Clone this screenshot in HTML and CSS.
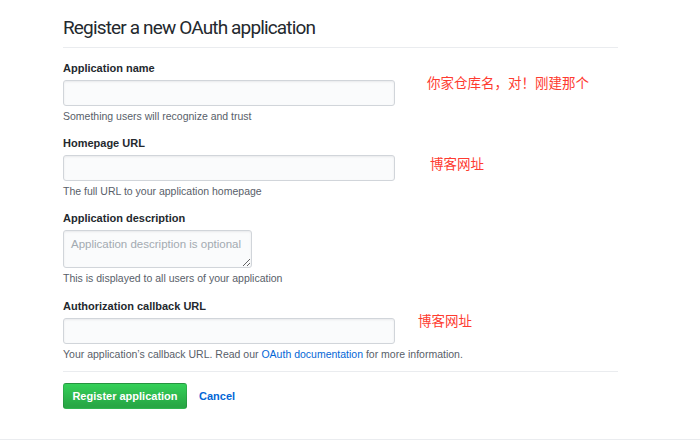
FILE: index.html
```html
<!DOCTYPE html>
<html lang="en">
<head>
<meta charset="utf-8">
<title>Register a new OAuth application</title>
<link rel="stylesheet" href="styles.css">
</head>
<body>
<div class="page">
  <h1 class="title">Register a new OAuth application</h1>
  <form class="form">
    <div class="group">
      <label class="label">Application name</label>
      <input class="input" type="text">
      <p class="note">Something users will recognize and trust</p>
      <span class="anno anno-1">你家仓库名，对！刚建那个</span>
    </div>
    <div class="group">
      <label class="label">Homepage URL</label>
      <input class="input" type="text">
      <p class="note">The full URL to your application homepage</p>
      <span class="anno anno-2">博客网址</span>
    </div>
    <div class="group group-desc">
      <label class="label">Application description</label>
      <textarea class="textarea" placeholder="Application description is optional"></textarea>
      <p class="note">This is displayed to all users of your application</p>
    </div>
    <div class="group">
      <label class="label">Authorization callback URL</label>
      <input class="input" type="text">
      <p class="note">Your application’s callback URL. Read our <a class="link" href="#">OAuth documentation</a> for more information.</p>
      <span class="anno anno-3">博客网址</span>
    </div>
    <div class="actions">
      <button class="btn" type="button">Register application</button>
      <a class="cancel" href="#">Cancel</a>
    </div>
  </form>
</div>
</body>
</html>
```
FILE: styles.css
```css
* { box-sizing: border-box; }
html, body { margin: 0; padding: 0; background: #fff; }
body {
  font-family: "Liberation Sans", Arial, "Noto Sans CJK SC", sans-serif;
  color: #24292e;
  border-bottom: 1px solid #eaecef;
  height: 440px;
}
.page {
  width: 618px;
  padding: 13px 0 0 63px;
}
.title {
  margin: 0;
  font-family: Roboto, "Liberation Sans", sans-serif;
  font-size: 19px;
  font-weight: normal;
  line-height: 30px;
  padding-bottom: 4px;
  border-bottom: 1px solid #eaecef;
  letter-spacing: -0.85px;
}
.form { display: flex; flex-direction: column; padding-top: 12px; }
.group { position: relative; display: flex; flex-direction: column; align-items: flex-start; margin-bottom: 11px; }
.group-desc { margin-bottom: 12px; }
.label {
  font-size: 11px;
  font-weight: bold;
  line-height: 16px;
  margin-bottom: 4px;
}
.input, .textarea {
  width: 332px;
  height: 26px;
  border: 1px solid #d1d5da;
  border-radius: 3px;
  background: #fafbfc;
  box-shadow: inset 0 1px 2px rgba(27,31,35,0.075);
  margin: 0;
  font: inherit;
}
.textarea {
  width: 189px;
  height: 38px;
  padding: 6px 7px;
  font-size: 11.5px;
  line-height: 14px;
  color: #24292e;
  resize: vertical;
}
.textarea::placeholder { color: #a3aab1; }
.note {
  margin: 2px 0 0;
  font-size: 10.5px;
  line-height: 16px;
  color: #586069;
}
.link { color: #0366d6; text-decoration: none; }
.anno {
  position: absolute;
  font-family: "Noto Sans CJK SC", sans-serif;
  font-size: 13.5px;
  line-height: 18px;
  color: #fe3b30;
  white-space: nowrap;
}
.anno-1 { left: 364px; top: 13px; }
.anno-2 { left: 367px; top: 19px; }
.anno-3 { left: 355px; top: 13px; }
.actions {
  display: flex;
  align-items: center;
  gap: 12px;
  border-top: 1px solid #eaecef;
  margin-top: -2px;
  padding-top: 11px;
  width: 555px;
}
.btn {
  height: 26px;
  width: 124px;
  padding: 0;
  border: 1px solid rgba(27,31,35,0.15);
  border-radius: 3px;
  background: linear-gradient(#34d058, #28a745 90%);
  color: #fff;
  font-family: inherit;
  font-size: 11px;
  font-weight: bold;
}
.cancel {
  color: #0366d6;
  font-size: 11px;
  font-weight: bold;
  text-decoration: none;
}
```
